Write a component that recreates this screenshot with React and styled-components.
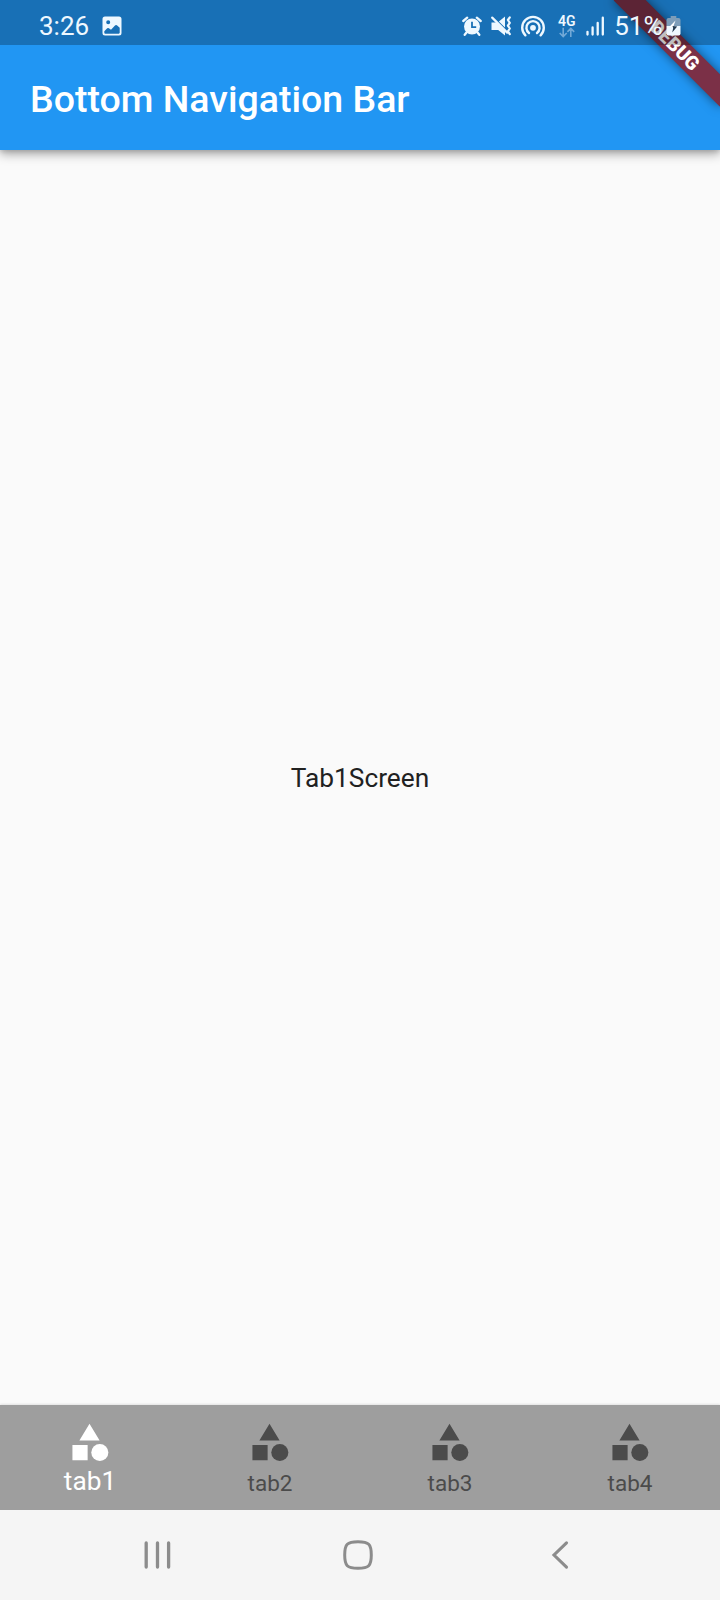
import React from "react";
import styled, { createGlobalStyle } from "styled-components";

const GlobalStyle = createGlobalStyle`
  * { box-sizing: border-box; }
  body { margin: 0; font-family: Roboto, "Liberation Sans", sans-serif; }
  svg { display: block; flex: none; }
`;

const Screen = styled.div`
  position: relative;
  display: flex;
  flex-direction: column;
  width: 720px;
  height: 1600px;
  overflow: hidden;
  background: #fafafa;
`;

const Header = styled.header`
  flex: none;
  height: 150px;
  background: #2196f3;
  box-shadow: 0 4px 10px rgba(0, 0, 0, 0.34), 0 2px 4px rgba(0, 0, 0, 0.1);
`;

const StatusBar = styled.div`
  position: relative;
  z-index: 2;
  display: flex;
  justify-content: space-between;
  height: 45px;
  padding: 7px 39px 0 39px;
  background: rgba(0, 0, 0, 0.25);
  color: #eef8ff;
`;

const StatusGroup = styled.div`
  display: flex;
  align-items: center;
  height: 38px;
  gap: ${(p) => p.$gap || 0}px;
`;

const StatusText = styled.span`
  font-size: 26px;
  line-height: 38px;
`;

const Battery = styled(StatusGroup)`
  margin-left: 9.5px;
`;

const Network = styled.div`
  display: flex;
  flex-direction: column;
  align-items: center;
  width: 18px;
  margin: 0 10px 0 12px;
`;

const NetworkLabel = styled.span`
  height: 12px;
  font-size: 14px;
  font-weight: 600;
  line-height: 12px;
`;

const TitleBar = styled.div`
  display: flex;
  align-items: center;
  height: 105px;
  padding: 2px 30px 0;
`;

const Title = styled.h1`
  margin: 0;
  color: #fff;
  font-size: 37.5px;
  font-weight: 500;
  line-height: 44px;
  white-space: nowrap;
`;

const DebugBanner = styled.div`
  position: absolute;
  z-index: 1;
  top: 33.9px;
  left: 599.9px;
  width: 150px;
  height: 22.5px;
  transform: rotate(45deg);
  background: #7b3047;
  box-shadow: 0 0 11px rgba(0, 0, 0, 0.5);
  color: #fff;
  font-size: 19.1px;
  font-weight: 900;
  line-height: 24px;
  text-align: center;
`;

const Body = styled.main`
  display: flex;
  flex: 1;
  align-items: center;
  justify-content: center;
  color: #212121;
  font-size: 26.25px;
`;

const TabBar = styled.nav`
  display: grid;
  grid-template-columns: repeat(4, 1fr);
  flex: none;
  height: 105px;
  background: #9e9e9e;
  box-shadow: 0 -1px 2px rgba(0, 0, 0, 0.1);
`;

const Tab = styled.div`
  display: flex;
  flex-direction: column;
  align-items: center;
  padding-top: 15px;
  color: ${(p) => (p.$selected ? "#fff" : "#4b4b4b")};
`;

const TabLabel = styled.span`
  margin-top: ${(p) => (p.$selected ? 1 : 3)}px;
  font-size: ${(p) => (p.$selected ? 26.25 : 22.5)}px;
  line-height: 31px;
`;

const SystemNav = styled.div`
  display: flex;
  align-items: center;
  flex: none;
  height: 90px;
  padding: 0 0 1px 143px;
  background: #f5f5f5;
  color: #8c8c8c;
`;

const NavButton = styled.div`
  margin-right: ${(p) => p.$after || 0}px;
`;

const PictureIcon = () => (
  <svg width="20" height="20" viewBox="0 0 20 20">
    <path
      fill="currentColor"
      fillRule="evenodd"
      d="M3 0.5h14a2.5 2.5 0 0 1 2.5 2.5v14a2.5 2.5 0 0 1-2.5 2.5H3A2.5 2.5 0 0 1 .5 17V3A2.5 2.5 0 0 1 3 .5zM6.2 4.3a2 2 0 1 0 0 4 2 2 0 0 0 0-4zM2.3 15.2v1.6c0 .5.4.9.9.9h13.600c.5 0 .9-.4.9-.9v-5l-2.800-2.500a1.400 1.400 0 0 0-1.900.1L9 13.800l-2.100-1.600a1.400 1.400 0 0 0-1.700.1z"
    />
  </svg>
);

const AlarmIcon = () => (
  <svg width="20" height="20" viewBox="0 0 20 20">
    <circle cx="10" cy="10.5" r="8" fill="currentColor" />
    <path d="M1.3 5 5.2 1.7M18.7 5l-3.9-3.3M4.5 16.5l-1.8 2.3m12.8-2.3 1.8 2.3" fill="none" stroke="currentColor" strokeWidth="2.3" strokeLinecap="round" />
    <path d="M10 5.8v5.4h4.2" fill="none" stroke="#1970b6" strokeWidth="1.8" />
  </svg>
);

const MuteIcon = () => (
  <svg width="20" height="20" viewBox="0 0 20 20">
    <path d="M.5 6.500h5.500l8 8v5L7.200 14H.5zM7.900 5.400 14 .5v11z" fill="currentColor" />
    <path d="m1.200 1.600 15 15" stroke="currentColor" strokeWidth="2.200" strokeLinecap="round" />
    <path d="M18.800 1.300 16.900 4l1.900 2.800L16.900 9.700l1.900 2.800-1.900 2.800 1.900 2.800" fill="none" stroke="currentColor" strokeWidth="2.200" strokeLinecap="round" strokeLinejoin="round" />
  </svg>
);

const HotspotIcon = () => (
  <svg width="26" height="22" viewBox="0 0 26 22">
    <circle cx="13" cy="12.8" r="2.9" fill="currentColor" />
    <path d="M9 18a6.6 6.6 0 1 1 8 0M5.4 20.3a10.8 10.8 0 1 1 15.2 0" fill="none" stroke="currentColor" strokeWidth="2.4" strokeLinecap="round" />
  </svg>
);

const DataArrows = () => (
  <svg width="18" height="11" viewBox="0 0 18 11">
    <path d="M5.2.8v8.4M1.7 6l3.5 3.5L8.7 6M12.8 10V1.5M9.4 4.9l3.4-3.5 3.4 3.5" fill="none" stroke="#72a9d7" strokeWidth="1.6" />
  </svg>
);

const SignalIcon = () => (
  <svg width="19" height="20" viewBox="0 0 19 20">
    <path d="M1.5 15.8v2.7M6.6 11.5v7M11.7 7v11.500M16.800 1.700v16.800" stroke="currentColor" strokeWidth="2.300" strokeLinecap="round" />
  </svg>
);

const BatteryIcon = () => (
  <svg width="15" height="20" viewBox="0 0 15 20">
    <path d="M4.7 0h5.6v2h2.2a2 2 0 0 1 2 2v6H.5V4a2 2 0 0 1 2-2h2.200z" fill="#7d9db9" />
    <path d="M.5 10h14v7.500a2 2 0 0 1-2 2h-10a2 2 0 0 1-2-2z" fill="currentColor" />
    <path d="M9.500 4.500 3.200 11h4z" fill="#fff" />
    <path d="m6.500 10 4.700.500-5 6 1-4.500z" fill="#20384f" />
  </svg>
);

const CategoryIcon = () => (
  <svg width="45" height="45" viewBox="0.3 0 24 24" fill="currentColor">
    <path d="m12.300 2-5.400 8.900h10.800zM3.200 13.300h8.100v8.100H3.200z" />
    <circle cx="17.800" cy="17.300" r="4.550" />
  </svg>
);

const CategoryArt = styled.div`
  margin-right: 1px;
`;

const RecentsIcon = () => (
  <svg width="28" height="30" viewBox="0 0 28 30">
    <path d="M3.2 3v24M14.5 3v24M25.6 3v24" stroke="currentColor" strokeWidth="3.3" strokeLinecap="round" />
  </svg>
);

const HomeIcon = () => (
  <svg width="32" height="32" viewBox="0 0 32 32">
    <path d="M16 2.700c10.800 0 13.300 2.500 13.300 13.300S26.800 29.300 16 29.300 2.700 26.800 2.700 16 5.200 2.700 16 2.700z" fill="none" stroke="currentColor" strokeWidth="3" />
  </svg>
);

const BackIcon = () => (
  <svg width="18" height="30" viewBox="0 0 18 30">
    <path d="M15.500 2.800 3 15l12.500 12.200" fill="none" stroke="currentColor" strokeWidth="3.100" strokeLinecap="round" />
  </svg>
);

const TABS = ["tab1", "tab2", "tab3", "tab4"];

export default function App() {
  return (
    <>
      <GlobalStyle />
      <Screen>
        <Header>
          <StatusBar>
            <StatusGroup $gap={13}>
              <StatusText>3:26</StatusText>
              <PictureIcon />
            </StatusGroup>
            <StatusGroup>
              <StatusGroup $gap={9}>
                <AlarmIcon />
                <MuteIcon />
                <HotspotIcon />
              </StatusGroup>
              <Network>
                <NetworkLabel>4G</NetworkLabel>
                <DataArrows />
              </Network>
              <SignalIcon />
              <Battery $gap={3.5}>
                <StatusText>51%</StatusText>
                <BatteryIcon />
              </Battery>
            </StatusGroup>
          </StatusBar>
          <TitleBar>
            <Title>Bottom Navigation Bar</Title>
          </TitleBar>
        </Header>
        <DebugBanner>DEBUG</DebugBanner>
        <Body>Tab1Screen</Body>
        <TabBar>
          {TABS.map((name, index) => (
            <Tab key={name} $selected={index === 0}>
              <CategoryArt>
                <CategoryIcon />
              </CategoryArt>
              <TabLabel $selected={index === 0}>{name}</TabLabel>
            </Tab>
          ))}
        </TabBar>
        <SystemNav>
          <NavButton $after={171}>
            <RecentsIcon />
          </NavButton>
          <NavButton $after={177}>
            <HomeIcon />
          </NavButton>
          <NavButton>
            <BackIcon />
          </NavButton>
        </SystemNav>
      </Screen>
    </>
  );
}
